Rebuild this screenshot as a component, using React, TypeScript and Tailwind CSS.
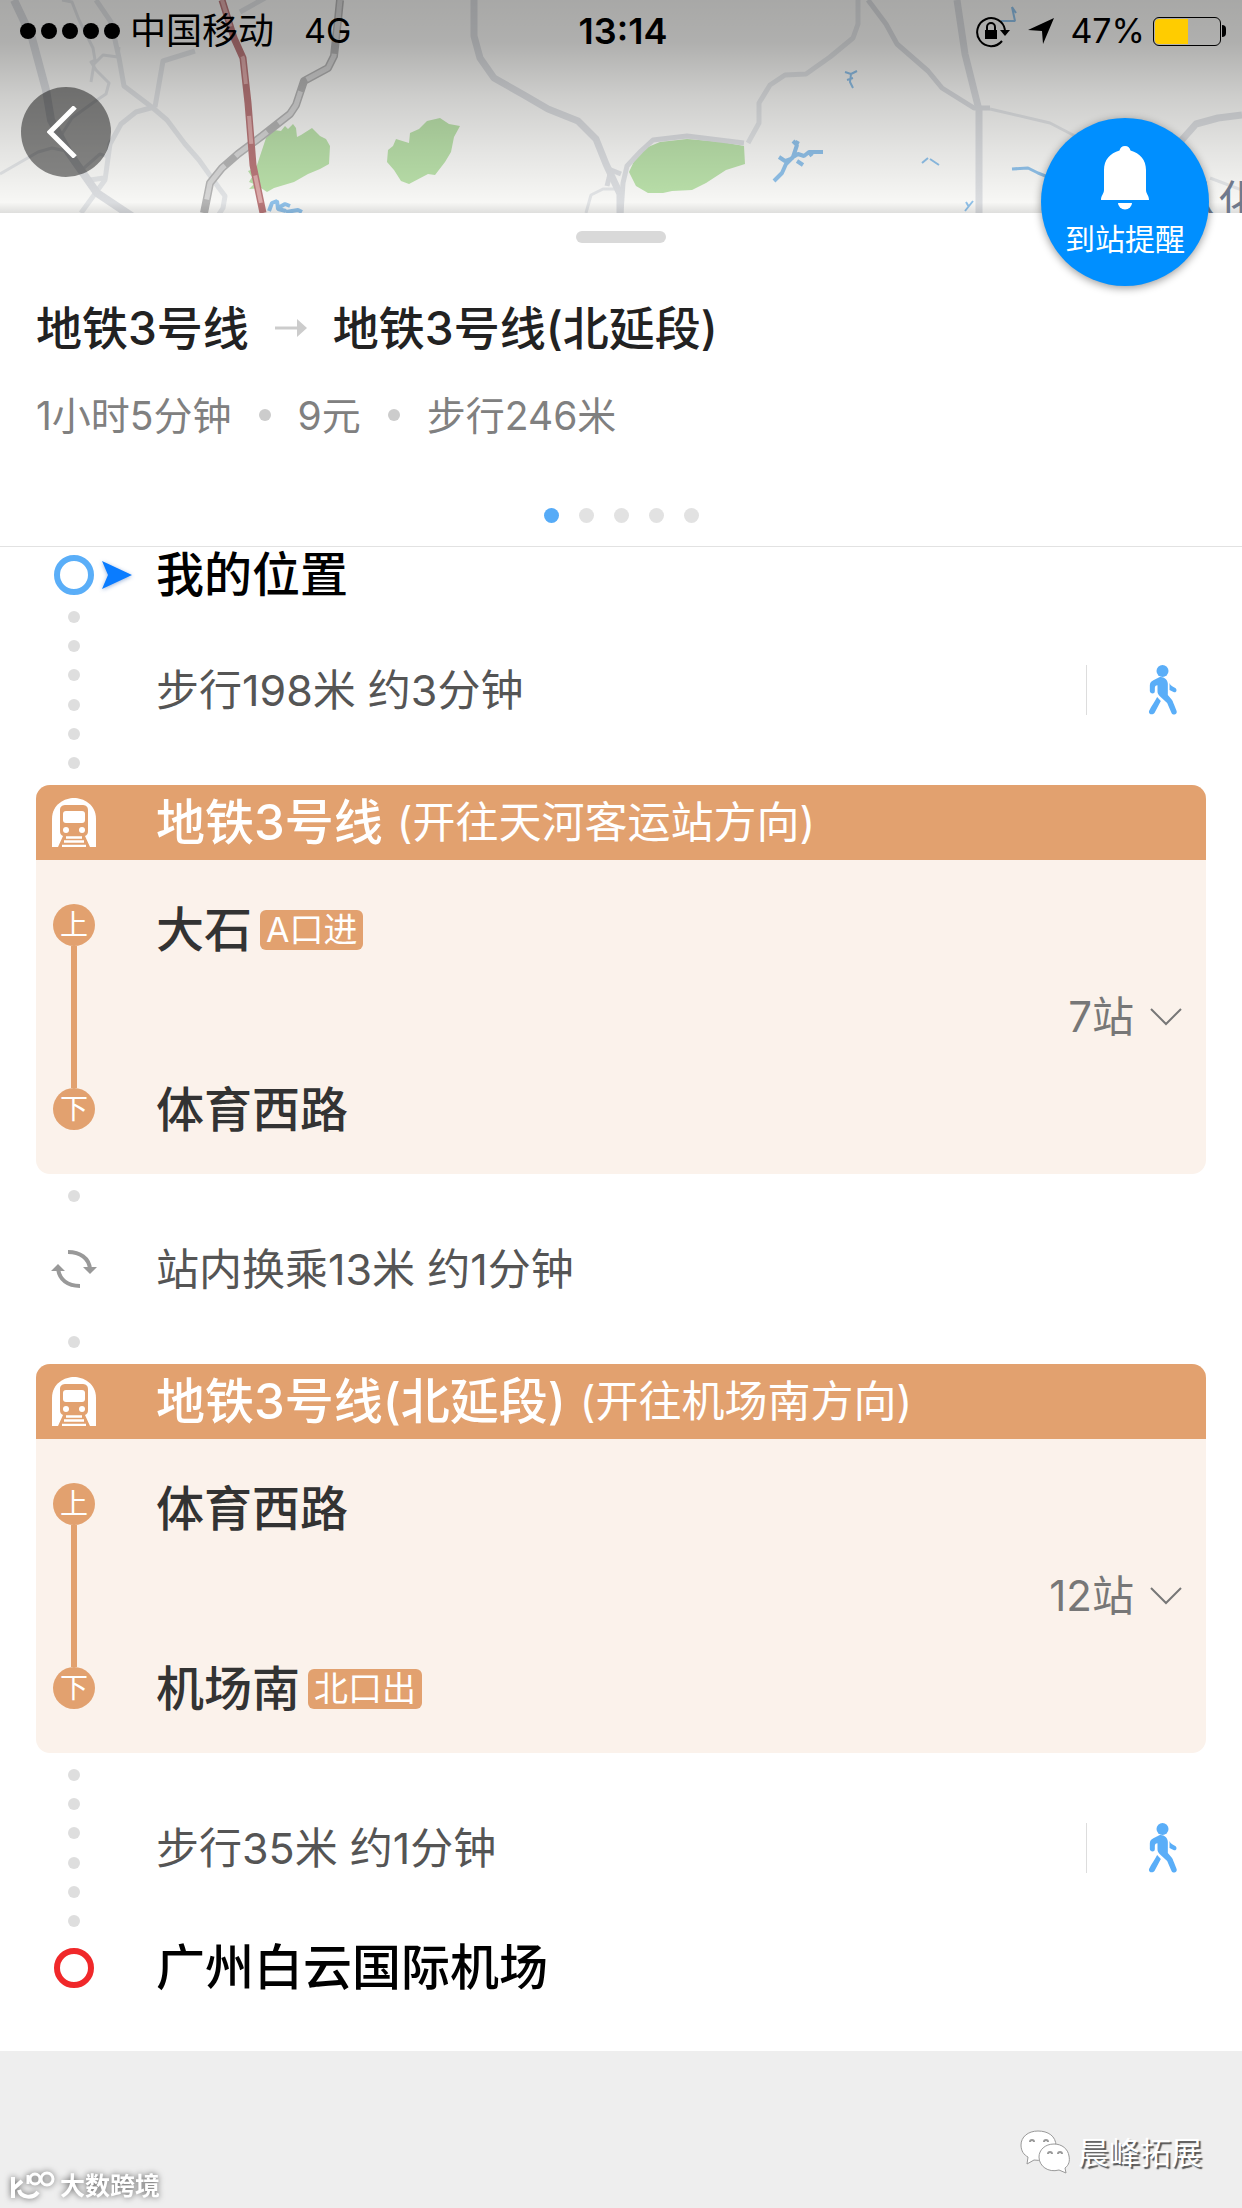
import type { ReactNode } from 'react';

interface Stop {
  name: string;
  exit?: string;
}

interface MetroLeg {
  line: string;
  direction: string;
  from: Stop;
  to: Stop;
  stops: number;
}

const LEGS: MetroLeg[] = [
  {
    line: '地铁3号线',
    direction: '(开往天河客运站方向)',
    from: { name: '大石', exit: 'A口进' },
    to: { name: '体育西路' },
    stops: 7,
  },
  {
    line: '地铁3号线(北延段)',
    direction: '(开往机场南方向)',
    from: { name: '体育西路' },
    to: { name: '机场南', exit: '北口出' },
    stops: 12,
  },
];

function MapBackground() {
  return (
    <svg
      viewBox="0 0 1242 213"
      preserveAspectRatio="xMidYMid slice"
      className="block h-[213px] w-full"
      aria-hidden="true"
    >
      <defs>
        <linearGradient id="shade" x1="0" y1="0" x2="0" y2="1">
          <stop offset="0" stopColor="#000" stopOpacity="0.32" />
          <stop offset="0.2" stopColor="#000" stopOpacity="0.29" />
          <stop offset="0.45" stopColor="#000" stopOpacity="0.17" />
          <stop offset="0.7" stopColor="#000" stopOpacity="0.08" />
          <stop offset="0.95" stopColor="#000" stopOpacity="0" />
          <stop offset="1" stopColor="#000" stopOpacity="0.1" />
        </linearGradient>
      </defs>
      <rect width="1242" height="213" fill="#f7f7f5" />

      {/* parks */}
      <g fill="#b9dfa9">
        <path d="M266 138l8-8 7 1 4-5 3 3 5-5 3 4 1 9 4-2 11-7 8 8 6 3 4 7-1 18-9 5-12 5-14 8-20 6-7 4-6-4-12 1 5-5-5-2 3-5-4-6 8-3z" />
        <path d="M396 139l13 4 1-10 9-4 8-8 13-3 9 6 11 2-6 11-3 15-6 10-10 13-7-1-19 10-8-3-7-11-7-8 1-12 5-4z" />
        <path d="M629 172l7-15 12-10 12-5 27-3 35 3 22 4 1 18-19 6-20 13-14 7-20 1-9 2-15 0-12-7z" />
      </g>

      {/* minor roads */}
      <g fill="none" stroke="#e1e3e5" strokeLinejoin="round">
        <path
          strokeWidth="3"
          d="M62 0l10 2 7 18 14 28 2 12-4 2 5 8 13 13-3 11-12 8-22 16-10 16M91 82l3-18 9-9 15 2 1-10M0 174l38-22 14-4 14 3M84 168l16-14 8 3"
        />
        <path
          strokeWidth="5"
          d="M96 0l15 22 8 36 5 28 29 22 14 12 18 24 14 16 20 28 6 8-2 12-9 14M155 107l8-46 32-10M240 12l25-14M154 107l-18 5-15 12-11 20-5 36-24 33M90 180l14-2"
        />
        <path strokeWidth="5" d="M858 0v24l-5 14-23 19-24 17-21 1-15 10-11 18v20l-11 20" />
        <path strokeWidth="3" d="M990 109l60 14 25 13M1210 178l32 12M586 213l5-18 12-6 18 0" />
      </g>

      {/* main roads */}
      <g fill="none" stroke="#dadcdf" strokeLinejoin="round">
        <path strokeWidth="8" d="M14 0l18 38 14 52 5 30 18 33 28 40 36 24" />
        <path strokeWidth="7" d="M474 0v36l6 22 14 20 30 17 24 14 30 12 18 18 10 25 14 30v22" />
        <path strokeWidth="5" d="M868 0l18 24 11 20 31 27 14 17 32 20h16" />
        <path strokeWidth="7" d="M957 0l8 54 14 56v103" />
        <path strokeWidth="7" d="M1180 142l16-18 22-6 24-3" />
        <path strokeWidth="5" d="M621 213l2-30 4-17 14-15 12-11 34-4 57 7M607 186l4-16 10 4" />
      </g>

      {/* railway and metro line */}
      <g fill="none" strokeLinejoin="round">
        <path stroke="#b4b4b4" strokeWidth="8" d="M340 0l-2 20-4 36-6 12-24 13-8 24-6 9-28 22-24 18-16 14-12 15-6 30" />
        <path
          stroke="#d6d6d6"
          strokeWidth="5"
          strokeDasharray="40 14"
          d="M340 0l-2 20-4 36-6 12-24 13-8 24-6 9-28 22-24 18-16 14-12 15-6 30"
        />
        <path stroke="#b9787a" strokeWidth="7" d="M222 0l12 38 9 20 5 45 5 62 5 24 5 24" />
        <path stroke="#dba9a9" strokeWidth="4" strokeDasharray="28 32" d="M222 0l12 38 9 20 5 45 5 62 5 24 5 24" />
      </g>

      {/* lakes and streams */}
      <g fill="none" stroke="#8fc0e8" strokeWidth="4" strokeLinejoin="bevel">
        <path d="M774 181l8-8 4-9 7-7 4-12-4-4M793 157l5-3 6 2 5-4h14M793 158l-8 3-6-4M797 161l6 4M796 145l2-4M809 152l3 4" />
        <path strokeWidth="2" d="M845 72l6 2 6-3M851 74l-1 8 3 6M853 78l-6 2M1001 21h14l-3-14 4 6M922 163l6-5M930 159l9 6M965 211l8-10M966 202l3 5" />
        <path strokeWidth="3" d="M1012 169l16-1 10 5 10 4" />
        <path d="M269 211l3-8 5-2 1 8 8 2M278 208l7-4 5 2M286 212l12-2 4 2" />
      </g>

      <rect width="1242" height="213" fill="url(#shade)" />
      <text x="1176" y="216" fontSize="42" fill="#6f798c" fontFamily="'Noto Sans CJK SC', sans-serif">
        从化
      </text>
    </svg>
  );
}

function StatusBar() {
  return (
    <div className="absolute inset-x-0 top-0 grid h-[62px] grid-cols-[1fr_auto_1fr] items-center px-4 text-4xl leading-none text-black">
      <div className="flex items-center gap-2.5 pl-1">
        <div className="flex gap-[5px]">
          {[0, 1, 2, 3, 4].map((i) => (
            <span key={i} className="size-4 rounded-full bg-black" />
          ))}
        </div>
        <span>中国移动</span>
        <span className="ml-5 text-[34px]">4G</span>
      </div>
      <span className="pl-1 font-semibold">13:14</span>
      <div className="flex items-center justify-end">
        <svg viewBox="0 0 36 34" className="h-[34px] w-9" fill="none" stroke="#000" strokeWidth="2">
          <path d="M26 27A14 14 0 1 1 29 16" />
          <path d="M24 16h10l-5 6z" fill="#000" stroke="none" />
          <rect x="9" y="16" width="12" height="9" fill="#000" stroke="none" />
          <path d="M11 16v-3a4 4 0 0 1 8 0v3" />
        </svg>
        <svg viewBox="0 0 26 26" className="mx-4 size-[26px]">
          <path d="M26 0L15 26l-1-13L0 12z" />
        </svg>
        <span className="text-[34px]">47%</span>
        <div className="ml-2 flex items-center gap-px">
          <div className="h-[29px] w-[68px] rounded-md border border-black p-px">
            <div className="h-full w-[33px] rounded-l-sm bg-[#ffcc00]" />
          </div>
          <div className="h-3 w-1 rounded-r-full bg-black" />
        </div>
      </div>
    </div>
  );
}

function ArrivalAlertButton() {
  return (
    <button className="absolute top-[118px] right-[33px] flex size-[168px] flex-col items-center rounded-full bg-[#008fff] pt-7 text-white shadow-[0_2px_8px_rgba(0,0,0,0.4)]">
      <svg viewBox="0 0 48 64" className="h-16 w-12" fill="currentColor">
        <path d="M24 0c3 0 5 2 5.500 4.500C39 7 45 14 45 24v20c0 4 3 5 3 10H0c0-5 3-6 3-10V24C3 14 9 7 18.500 4.500 19 2 21 0 24 0z" />
        <path d="M17 57h14a7 6.500 0 0 1-14 0z" />
      </svg>
      <span className="mt-3.5 text-[30px] leading-none">到站提醒</span>
    </button>
  );
}

function TrainIcon() {
  return (
    <svg viewBox="0 0 44 49" className="h-[49px] w-11">
      <path fill="#fff" d="M0 49V21C0 6 13 0 22 0s22 6 22 21v28z" />
      <path fill="#e2a16f" d="M8 12c0-4 3-5 6-5h16c3 0 6 1 6 5v21c0 3-1 4-3 5l5 11H6l5-11c-2-1-3-2-3-5z" />
      <rect x="11" y="13" width="22" height="12" rx="3" fill="#fff" />
      <circle cx="14" cy="32" r="3" fill="#fff" />
      <circle cx="30" cy="32" r="3" fill="#fff" />
      <path stroke="#fff" strokeWidth="2.500" d="M14 39.500h16M12 43.500h20M10 48h24" />
    </svg>
  );
}

function WalkIcon() {
  return (
    <svg viewBox="0 0 92 156" className="h-[52px] w-[31px]" fill="#5aaef8">
      <circle cx="46" cy="21" r="18" />
      <path d="M38 39c12-2 24 8 24 20v34l12 14c3 4 4 8 6 13l8 20c4 11-10 16-15 7L60 117 38 97c-5-5-7-9-7-15V64c-6 0-8 3-8 9v8c0 11-15 9-15 0V64c0-9 5-12 12-16z" />
      <path d="M30 99l11 12-19 36c-6 8-20 3-16-7 8-16 15-24 24-41z" />
      <path d="M67 57c3 8 8 10 16 14 9 5 5 17-4 13l-12-6z" />
    </svg>
  );
}

function TransferIcon() {
  return (
    <svg viewBox="0 0 46 38" className="h-[38px] w-[46px]" fill="none" stroke="#999" strokeWidth="4">
      <path d="M17 2c12 0 21 6 22 17M29 36C17 36 8 30 7 18" />
      <path d="M32 17l14 0-7 7zM0 21l14 0-7-7z" fill="#999" stroke="none" />
    </svg>
  );
}

// One row of the timeline: icon rail on the left, content next to it
function Row({ rail, children, className }: { rail: ReactNode; children: ReactNode; className: string }) {
  return (
    <div className={'grid grid-cols-[76px_1fr] gap-x-11 ' + className}>
      {rail}
      {children}
    </div>
  );
}

function Dots({ count }: { count: number }) {
  return (
    <>
      {Array.from({ length: count }, (_, i) => (
        <span key={i} className="size-3 rounded-full bg-[#dedede]" />
      ))}
    </>
  );
}

function WalkRow({ text }: { text: string }) {
  return (
    <Row
      className="h-[190px]"
      rail={
        <div className="flex flex-col items-center justify-between py-4">
          <Dots count={6} />
        </div>
      }
    >
      <div className="flex items-center justify-between">
        <p className="text-[43px] leading-none text-[#555]">{text}</p>
        <button aria-label="步行导航" className="flex h-[50px] items-center border-l border-[#ddd] pr-7 pl-[60px]">
          <WalkIcon />
        </button>
      </div>
    </Row>
  );
}

function TransferRow({ text }: { text: string }) {
  return (
    <Row
      className="h-[190px]"
      rail={
        <div className="flex flex-col items-center justify-between py-4">
          <Dots count={1} />
          <TransferIcon />
          <Dots count={1} />
        </div>
      }
    >
      <p className="self-center text-[43px] leading-none text-[#555]">{text}</p>
    </Row>
  );
}

function StopName({ stop }: { stop: Stop }) {
  return (
    <div className="flex h-12 items-center gap-2">
      <h3 className="text-5xl leading-none font-medium text-[#333]">{stop.name}</h3>
      {stop.exit && (
        <span className="flex h-10 items-center rounded-md bg-[#e2a16f] px-1.5 text-[34px] leading-none text-white">
          {stop.exit}
        </span>
      )}
    </div>
  );
}

function RailBadge({ children }: { children: ReactNode }) {
  return (
    <span className="flex size-[42px] items-center justify-center rounded-full bg-[#e2a16f] text-[28px] leading-none text-white">
      {children}
    </span>
  );
}

function LegCard({ leg }: { leg: MetroLeg }) {
  return (
    <section className="overflow-hidden rounded-[14px] bg-[#fbf2eb]">
      <Row
        className="h-[75px] items-center bg-[#e2a16f] text-white"
        rail={
          <div className="flex justify-center">
            <TrainIcon />
          </div>
        }
      >
        <div className="flex items-center gap-3.5 leading-none whitespace-nowrap">
          <h2 className="text-[49px] font-medium">{leg.line}</h2>
          <span className="text-[43px]">{leg.direction}</span>
        </div>
      </Row>
      <Row
        className="h-[314px]"
        rail={
          <div className="flex flex-col items-center py-11">
            <RailBadge>上</RailBadge>
            <span className="w-1.5 flex-1 bg-[#e2a16f]" />
            <RailBadge>下</RailBadge>
          </div>
        }
      >
        <div className="flex items-center justify-between pr-6">
          <div className="flex h-full flex-col justify-between pt-[46px] pb-10">
            <StopName stop={leg.from} />
            <StopName stop={leg.to} />
          </div>
          <button className="flex items-center gap-4 text-[42px] leading-none text-[#777]">
            {leg.stops}站
            <svg viewBox="0 0 32 18" className="h-[18px] w-8" fill="none" stroke="currentColor" strokeWidth="2">
              <path d="M1 1l15 15L31 1" />
            </svg>
          </button>
        </div>
      </Row>
    </section>
  );
}

function RouteSummary() {
  return (
    <header className="border-b border-[#e2e2e2] bg-white pt-[18px] pb-[23px]">
      <div className="mx-auto h-3 w-[90px] rounded-full bg-[#d9d9d9]" />
      <div className="mt-[62px] flex items-center gap-[26px] px-9 text-[46px] leading-none font-medium text-[#222]">
        <h1>地铁3号线</h1>
        <svg viewBox="0 0 32 18" className="h-[18px] w-8">
          <path d="M0 9h24" stroke="#ccc" strokeWidth="3" />
          <path d="M22 0l10 9-10 9z" fill="#ccc" />
        </svg>
        <span>地铁3号线(北延段)</span>
      </div>
      <div className="mt-11 flex h-10 items-center gap-[27px] px-9 text-[39px] leading-none text-[#808080]">
        <span>1小时5分钟</span>
        <span className="size-3 rounded-full bg-[#ccc]" />
        <span>9元</span>
        <span className="size-3 rounded-full bg-[#ccc]" />
        <span>步行246米</span>
      </div>
      <div className="mt-[73px] flex justify-center gap-5">
        <span className="size-[15px] rounded-full bg-[#56abf7]" />
        {[1, 2, 3, 4].map((i) => (
          <span key={i} className="size-[15px] rounded-full bg-[#e2e2e2]" />
        ))}
      </div>
    </header>
  );
}

function Footer() {
  return (
    <footer className="flex h-[157px] items-end justify-between pr-10 pb-1.5 pl-2 text-white">
      <div className="flex items-center gap-1 drop-shadow-[0_0_3px_rgba(0,0,0,0.6)]">
        <svg viewBox="0 0 48 32" className="h-8 w-12" fill="none" stroke="#fff" strokeWidth="4">
          <path d="M5 7v21M5 19l9-8M11 20c2 8 14 9 19 2" />
          <path d="M20 5v9" strokeWidth="3" />
          <circle cx="27" cy="9" r="5" strokeWidth="3" />
          <circle cx="39" cy="9" r="6" strokeWidth="3" />
        </svg>
        <span className="text-[25px] leading-none font-bold">大数跨境</span>
      </div>
      <div className="flex items-center gap-2 pb-7">
        <svg viewBox="0 0 50 44" className="h-11 w-[50px]" fill="#fff" stroke="#999" strokeWidth="1">
          <path d="M18 1C8 1 1 7 1 15c0 6 3 10 7 12l-1 7 7-4c13 2 22-4 22-14S28 1 18 1z" />
          <path d="M34 14c-9 0-15 6-15 13 0 9 9 16 20 13l7 3-1-5c4-3 5-7 4-12-1-7-7-12-15-12z" />
          <g fill="none" strokeWidth="2">
            <path d="M10 12a2 2 0 0 1 4 0M24 12a2 2 0 0 1 4 0M28 24a2 2 0 0 1 4 0M38 24a2 2 0 0 1 4 0" />
          </g>
        </svg>
        <span className="text-[31px] leading-none [text-shadow:2px_2px_1px_#555]">晨峰拓展</span>
      </div>
    </footer>
  );
}

export default function App() {
  return (
    <div className="min-h-screen bg-[#eee] font-['Inter','Noto_Sans_CJK_SC',sans-serif]">
      <div className="relative">
        <MapBackground />
        <StatusBar />
        <button
          aria-label="返回"
          className="absolute top-[87px] left-[21px] flex size-[90px] items-center justify-center rounded-full bg-black/45"
        >
          <svg viewBox="0 0 30 52" className="mr-2 h-[52px] w-[30px]" fill="none" stroke="#fff" strokeWidth="5">
            <path d="M28 1L3 26l25 25" />
          </svg>
        </button>
        <ArrivalAlertButton />
      </div>

      <RouteSummary />

      <main className="bg-white px-9 pb-[60px]">
        <Row
          className="h-12 items-center pt-1"
          rail={
            <div className="flex items-center gap-[7px] pl-[18px]">
              <span className="size-10 shrink-0 rounded-full border-[6px] border-[#5aaef8]" />
              <svg viewBox="0 0 32 30" className="h-[30px] w-8 shrink-0 drop-shadow-[0_1px_2px_rgba(0,60,160,0.4)]">
                <path fill="#0a7cff" d="M1 1l30 14L1 29l6-14z" />
              </svg>
            </div>
          }
        >
          <h3 className="text-5xl leading-none font-medium text-black">我的位置</h3>
        </Row>
        <WalkRow text="步行198米 约3分钟" />
        <LegCard leg={LEGS[0]} />
        <TransferRow text="站内换乘13米 约1分钟" />
        <LegCard leg={LEGS[1]} />
        <WalkRow text="步行35米 约1分钟" />
        <Row
          className="h-12 items-center"
          rail={
            <div className="flex justify-center">
              <span className="size-10 rounded-full border-[6px] border-[#f0282a]" />
            </div>
          }
        >
          <h3 className="text-[49px] leading-none font-medium text-black">广州白云国际机场</h3>
        </Row>
      </main>

      <Footer />
    </div>
  );
}
